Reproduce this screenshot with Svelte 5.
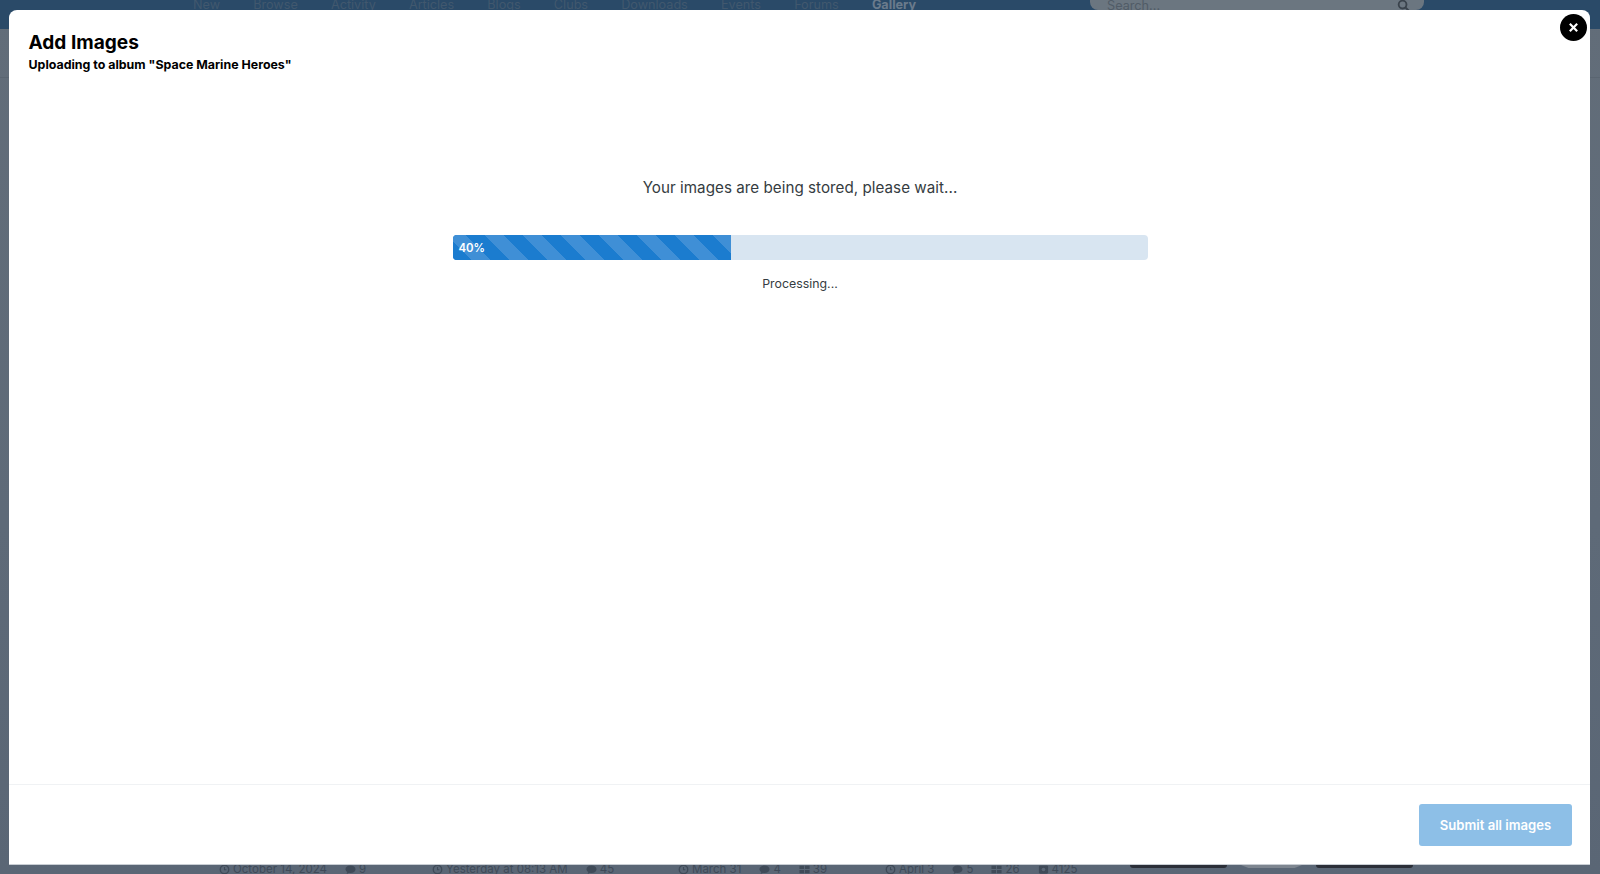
<script>
  const navItems = ['New', 'Browse', 'Activity', 'Articles', 'Blogs', 'Clubs', 'Downloads', 'Events', 'Forums', 'Gallery'];
</script>

{#snippet clock()}
  <svg class="ico" viewBox="0 0 12 12"><circle cx="6" cy="6" r="4.600" fill="none" stroke="currentColor" stroke-width="1.500"/><path d="M6 3.400V6.300H8" fill="none" stroke="currentColor" stroke-width="1.200"/></svg>
{/snippet}
{#snippet bubble()}
  <svg class="ico" viewBox="0 0 12 12"><path d="M6 1.500c3.100 0 5.500 1.800 5.500 4.100S9.100 9.700 6 9.700c-.6 0-1.100-.1-1.600-.2L1.800 11l.7-2.400C1.300 7.900.5 6.800.5 5.600.5 3.300 2.900 1.500 6 1.500z" fill="currentColor"/></svg>
{/snippet}
{#snippet grid()}
  <svg class="ico" viewBox="0 0 12 12"><path d="M.5 2h5v3.500h-5zM6.500 2h5v3.500h-5zM.5 6.500h5V10h-5zM6.500 6.500h5V10h-5z" fill="currentColor"/></svg>
{/snippet}
{#snippet camera()}
  <svg class="ico" viewBox="0 0 12 12"><rect x="1" y="1.500" width="10" height="9" rx="1.500" fill="currentColor"/><circle cx="6" cy="6" r="2" fill="#5b6776"/></svg>
{/snippet}

<div class="page">
  <header class="topbar">
    <nav class="nav">
      {#each navItems as item}
        <span class="nav-item" class:active={item === 'Gallery'}>{item}</span>
      {/each}
    </nav>
    <div class="search">
      <span>Search...</span>
      <svg class="search-ico" viewBox="0 0 14 14"><circle cx="6" cy="6" r="4.200" fill="none" stroke="currentColor" stroke-width="2"/><path d="M9 9l4 4" stroke="currentColor" stroke-width="2.200"/></svg>
    </div>
  </header>

  <div class="subnav"></div>
  <div class="filler"></div>

  <footer class="meta">
    <div class="meta-group g1"><span class="m">{@render clock()}October 14, 2024</span><span class="m">{@render bubble()}9</span></div>
    <div class="meta-group g2"><span class="m">{@render clock()}Yesterday at 08:13 AM</span><span class="m">{@render bubble()}45</span></div>
    <div class="meta-group g3"><span class="m">{@render clock()}March 31</span><span class="m">{@render bubble()}4</span><span class="m">{@render grid()}39</span></div>
    <div class="meta-group g4"><span class="m">{@render clock()}April 3</span><span class="m">{@render bubble()}5</span><span class="m">{@render grid()}26</span><span class="m">{@render camera()}4125</span></div>
    <div class="bars"><i></i><b></b><i></i></div>
  </footer>
</div>

<div class="modal">
  <div class="modal-head">
    <h1>Add Images</h1>
    <p>Uploading to album "Space Marine Heroes"</p>
  </div>

  <div class="modal-body">
    <div class="status">Your images are being stored, please wait...</div>
    <div class="progress">
      <div class="fill" style="width: 40%"><span>40%</span></div>
    </div>
    <div class="sub">Processing...</div>
  </div>

  <div class="modal-foot">
    <button class="submit" disabled>Submit all images</button>
  </div>

  <button class="close" aria-label="Close">
    <svg viewBox="0 0 12 12"><path d="M2 2l8 8M10 2l-8 8" stroke="#fff" stroke-width="2.400" fill="none"/></svg>
  </button>
</div>

<style>
  :global(body) {
    margin: 0;
    overflow: hidden;
    font-family: Inter, "Liberation Sans", sans-serif;
    background: #5b6776;
  }
  .page {
    width: 1600px;
    height: 874px;
    display: flex;
    flex-direction: column;
    background: linear-gradient(180deg, #626d79 0%, #5e6a78 60%, #5a6675 100%);
    overflow: hidden;
  }
  .topbar {
    height: 29px;
    flex: none;
    background: #2a4a68;
    display: flex;
    padding: 0 176px 0 193px;
    box-sizing: border-box;
  }
  .subnav {
    height: 49px;
    flex: none;
    box-sizing: border-box;
    border-bottom: 1px solid #5a6571;
  }
  .nav {
    display: flex;
    gap: 33.200px;
    height: 10px;
    align-items: center;
  }
  .nav-item {
    font-size: 12.650px;
    color: #41586e;
    line-height: 10px;
    white-space: nowrap;
  }
  .nav-item.active {
    font-weight: 700;
    color: #6a7b8c;
  }
  .search {
    margin-left: auto;
    width: 334px;
    height: 10px;
    background: #6b7680;
    border-radius: 0 0 8px 8px;
    display: flex;
    align-items: center;
    justify-content: space-between;
    padding: 0 14px 0 17px;
    box-sizing: border-box;
    font-size: 12.700px;
    color: #515c67;
  }
  .search-ico {
    width: 13px;
    height: 13px;
    color: #3a434c;
  }
  .filler {
    flex: 1;
  }
  .meta {
    height: 10px;
    flex: none;
    display: flex;
    padding: 0 187px 0 219px;
    font-size: 11.500px;
    line-height: 10px;
    color: #3f4a58;
  }
  .meta-group {
    display: flex;
    gap: 18px;
    white-space: nowrap;
  }
  .g1 { width: 213px; }
  .g2 { width: 246px; }
  .g3 { width: 207px; }
  .m {
    display: inline-flex;
    align-items: center;
    gap: 3px;
  }
  .ico {
    width: 11px;
    height: 11px;
    flex: none;
  }
  .bars {
    margin-left: auto;
    display: flex;
    justify-content: space-between;
    width: 283px;
  }
  .bars i {
    display: block;
    width: 97px;
    height: 4px;
    background: #2b2f38;
    border-radius: 0 0 3px 3px;
  }
  .bars b {
    display: block;
    width: 66px;
    height: 4px;
    background: #7e8690;
    clip-path: polygon(0 0, 100% 0, 85% 100%, 15% 100%);
  }
  .modal {
    position: absolute;
    left: 9px;
    top: 10px;
    width: 1581px;
    height: 854px;
    background: #fff;
    border-radius: 8px 8px 0 0;
    box-shadow: 0 1px 0 #c9ced4;
    display: flex;
    flex-direction: column;
    color: #000;
  }
  .modal-head {
    padding: 22px 19.500px 0;
    flex: none;
  }
  h1 {
    margin: 0;
    font-size: 19.100px;
    line-height: 20px;
    font-weight: 700;
  }
  .modal-head p {
    margin: 4px 0 0;
    font-size: 12.400px;
    line-height: 18px;
    font-weight: 700;
  }
  .modal-body {
    flex: 1;
    display: flex;
    flex-direction: column;
    align-items: center;
    padding: 102px 0 0 1px;
  }
  .status {
    font-size: 15.200px;
    line-height: 24px;
    color: #353c41;
    letter-spacing: 0.03px;
  }
  .progress {
    width: 695px;
    height: 25px;
    margin-top: 35px;
    background: #d8e5f1;
    border-radius: 4px;
    overflow: hidden;
  }
  .fill {
    height: 100%;
    background-color: #1b7ccf;
    background-image: repeating-linear-gradient(45deg, #1b7ccf 0 13.400px, #3f8fd6 13.400px 26.800px);
    display: flex;
    align-items: center;
    padding-left: 6px;
    box-sizing: border-box;
    color: #fff;
    font-size: 11.400px;
    font-weight: 600;
  }
  .sub {
    margin-top: 15px;
    font-size: 12.350px;
    line-height: 18px;
    color: #353c41;
  }
  .modal-foot {
    flex: none;
    height: 80px;
    box-sizing: border-box;
    border-top: 1px solid #f0f2f4;
    display: flex;
    justify-content: flex-end;
    align-items: flex-start;
    padding: 19px 18px 0 0;
  }
  .submit {
    width: 153px;
    height: 42px;
    border: 0;
    border-radius: 3px;
    background: #8dbfe7;
    color: #fff;
    font: 600 13.100px Inter, "Liberation Sans", sans-serif;
  }
  .close {
    position: absolute;
    top: 4px;
    right: 3px;
    width: 27px;
    height: 27px;
    border: 0;
    border-radius: 50%;
    background: #000;
    padding: 0;
    display: flex;
    align-items: center;
    justify-content: center;
  }
  .close svg {
    width: 11px;
    height: 11px;
  }
</style>
